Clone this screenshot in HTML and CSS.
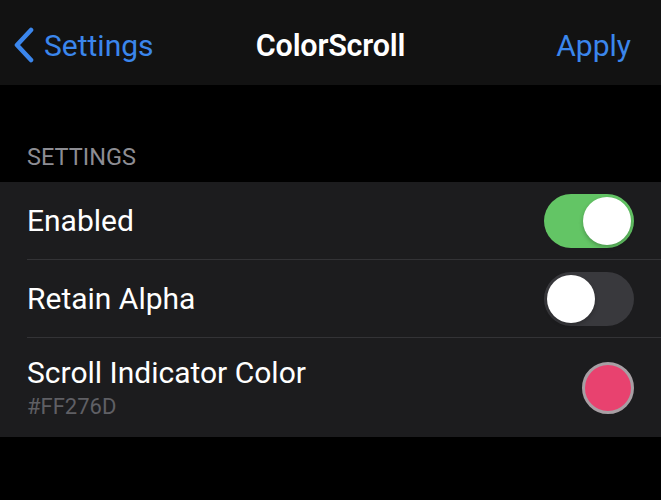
FILE: index.html
```html
<!DOCTYPE html>
<html>
<head>
<meta charset="utf-8">
<link rel="stylesheet" href="styles.css">
</head>
<body>
<header class="nav">
  <div class="nav-left">
    <svg class="chev" width="24" height="36" viewBox="0 0 24 36"><path d="M19 3 L5 18 L19 33" fill="none" stroke="#3b86ec" stroke-width="4.6" stroke-linecap="round" stroke-linejoin="round"/></svg>
    <span class="nav-link">Settings</span>
  </div>
  <div class="nav-title">ColorScroll</div>
  <div class="nav-right"><span class="nav-link">Apply</span></div>
</header>
<main class="content">
  <div class="section-header">SETTINGS</div>
  <div class="group">
    <div class="row">
      <span class="label">Enabled</span>
      <span class="toggle on"><span class="knob"></span></span>
    </div>
    <div class="row">
      <span class="label">Retain Alpha</span>
      <span class="toggle off"><span class="knob"></span></span>
    </div>
    <div class="row row-tall">
      <div class="stack">
        <span class="label">Scroll Indicator Color</span>
        <span class="sub">#FF276D</span>
      </div>
      <span class="swatch"></span>
    </div>
  </div>
</main>
</body>
</html>
```
FILE: styles.css
```css
* { box-sizing: border-box; }
html, body { margin: 0; padding: 0; }
body {
  background: #000;
  font-family: Roboto, "Liberation Sans", sans-serif;
  color: #fff;
  width: 661px;
  height: 500px;
  overflow: hidden;
}
.nav {
  height: 85px;
  background: #121212;
  display: grid;
  grid-template-columns: 1fr auto 1fr;
  align-items: center;
  padding: 6px 12px 0 12px;
}
.nav-left {
  display: flex;
  align-items: center;
  gap: 8px;
}
.chev { display: block; margin-top: -1px; }
.nav-link {
  color: #3b86ec;
  font-size: 30px;
  line-height: 36px;
}
.nav-title {
  font-size: 30.5px;
  font-weight: 600;
  line-height: 36px;
  letter-spacing: -0.2px;
}
.nav-right { display: flex; justify-content: flex-end; padding-right: 18px; }
.content { padding-top: 58px; }
.section-header {
  color: #8d8d93;
  font-size: 23.5px;
  line-height: 28px;
  padding: 0 27px 11px;
}
.group {
  background: #1c1c1e;
  padding-left: 27px;
}
.row {
  height: 78px;
  display: flex;
  align-items: center;
  justify-content: space-between;
  padding-right: 27px;
  border-bottom: 1px solid #333336;
}
.row:last-child { border-bottom: none; }
.row-tall { height: 99px; }
.label {
  font-size: 30px;
  line-height: 36px;
}
.stack {
  display: flex;
  flex-direction: column;
  padding-bottom: 1px;
}
.sub {
  color: #5f5f64;
  font-size: 22px;
  line-height: 26px;
  margin-top: 3px;
}
.toggle {
  width: 90px;
  height: 54px;
  border-radius: 27px;
  display: flex;
  align-items: center;
  padding: 0 3px;
}
.toggle.on { background: #63c565; justify-content: flex-end; }
.toggle.off { background: #39393d; justify-content: flex-start; }
.knob {
  width: 48px;
  height: 48px;
  border-radius: 50%;
  background: #fff;
  box-shadow: 0 2px 4px rgba(0,0,0,0.25);
}
.swatch {
  width: 52px;
  height: 52px;
  border-radius: 50%;
  background: #e8426f;
  border: 3px solid #a79fa4;
}
```
